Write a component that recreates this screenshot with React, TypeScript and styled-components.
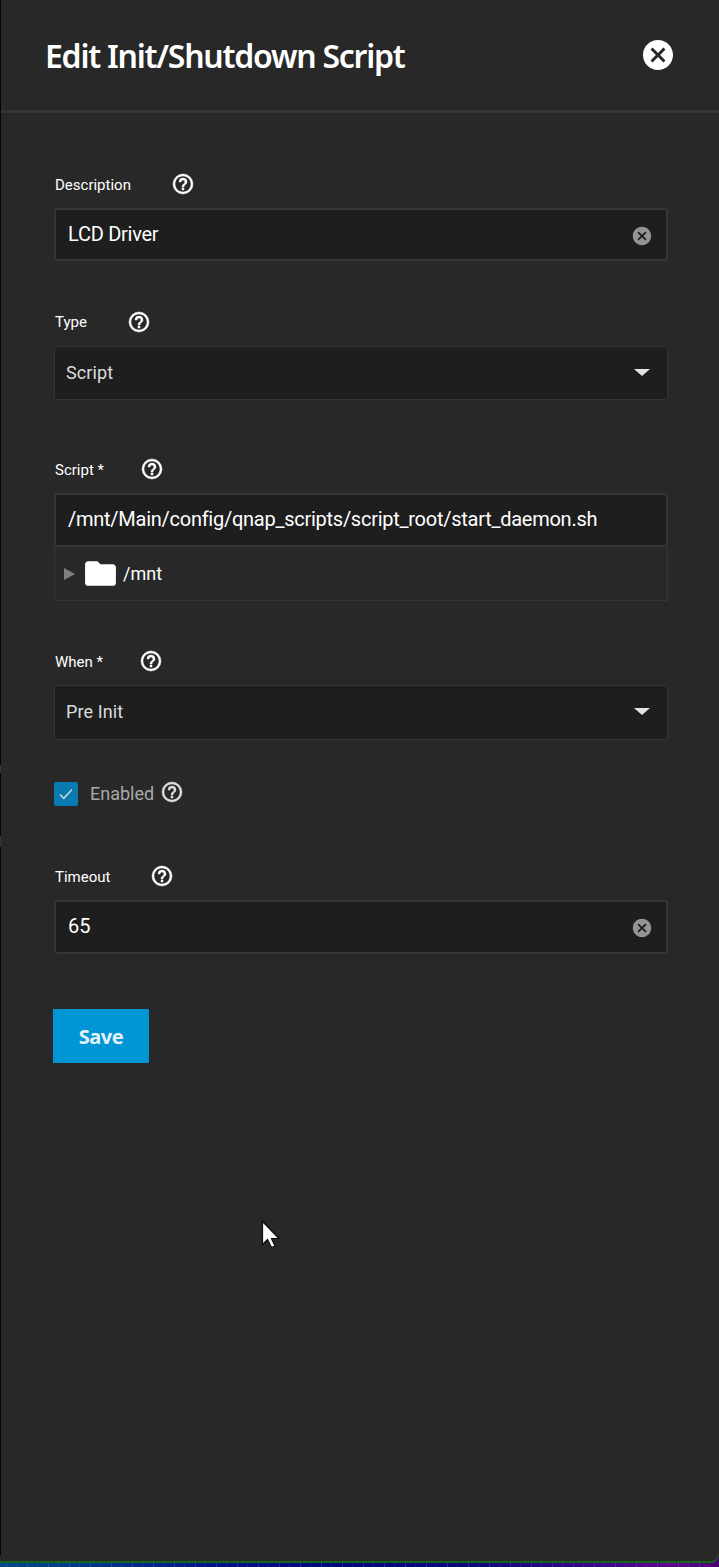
import React from "react";
import styled, { createGlobalStyle } from "styled-components";

const GlobalStyle = createGlobalStyle`
  *, *::before, *::after { box-sizing: border-box; }
  body { margin: 0; background: #000; font-family: Roboto, "Liberation Sans", sans-serif; color: #fff; overflow: hidden; }
`;

const Screen = styled.div`
  display: flex;
  flex-direction: column;
  width: 719px;
  height: 1567px;
  padding-left: 1px;
  position: relative;
  background: #050505;
`;

const Panel = styled.section`
  flex: 1;
  display: flex;
  flex-direction: column;
  background: #282828;
`;

const WindowEdge = styled.div`
  height: 8px;
  flex: none;
  border: solid #14641a;
  border-width: 0 2px 2px 0;
  border-right-color: #1d4a22;
  border-radius: 0 0 10px 0;
  background: #282828;
`;

const Footer = styled.div`
  flex: none;
  height: 12px;
  margin-left: -1px;
  display: flex;
  flex-direction: column;
  background:
    repeating-linear-gradient(90deg, transparent 0 6px, rgba(80, 110, 255, 0.35) 6px 7px, transparent 7px 16px, rgba(80, 110, 255, 0.18) 16px 17px, transparent 17px 21px),
    linear-gradient(90deg, #00498a 0, #00378a 90px, #00108a 220px, #000080 340px, #10007c 480px, #3a0088 590px, #62008c 670px, #4a0072 719px);
`;

const Header = styled.header`
  height: 113px;
  padding: 0 45px;
  display: flex;
  align-items: center;
  justify-content: space-between;
  border-bottom: 3px solid #353535;
`;

const Title = styled.h1`
  margin: 1px 0 0 -1px;
  font: 600 32px/40px "Noto Sans", sans-serif;
  letter-spacing: -1.25px;
  white-space: nowrap;
`;

const CloseButton = styled.button`
  display: flex;
  width: 36px;
  height: 36px;
  margin-right: -2px;
  padding: 0;
  border: 0;
  background: none;
  color: #fff;
`;

const Form = styled.form`
  display: flex;
  flex-direction: column;
  padding: 0 51px 0 53px;
`;

const Field = styled.div<{ $top: number }>`
  margin-top: ${(p) => p.$top}px;
`;

const LabelRow = styled.div<{ $gap: number }>`
  display: flex;
  align-items: center;
  gap: ${(p) => p.$gap}px;
  height: 24px;
  margin-bottom: 12px;
  padding-left: 1px;
`;

const Label = styled.label<{ $raised?: boolean }>`
  font-size: 15px;
  line-height: 24px;
  padding: ${(p) => (p.$raised ? "0 0 1px" : "1px 0 0")};
`;

const InputBox = styled.div<{ $height?: number }>`
  display: flex;
  align-items: center;
  justify-content: space-between;
  height: ${(p) => p.$height ?? 54}px;
  padding: 0 13px 0 12px;
  border: 2px solid #353535;
  border-radius: 3px;
  background: #1e1e1e;
`;

const Value = styled.span<{ $spacing?: number }>`
  font-size: 20px;
  line-height: 24px;
  margin-bottom: 2px;
  letter-spacing: ${(p) => p.$spacing ?? -0.26}px;
`;

const ClearIcon = styled.svg`
  width: 22px;
  height: 22px;
  margin-top: 2px;
  fill: #949494;
`;

const SelectBox = styled.div<{ $height: number }>`
  display: flex;
  align-items: center;
  justify-content: space-between;
  height: ${(p) => p.$height}px;
  padding: 0 17px 2px 11px;
  border: 1px solid #353535;
  border-radius: 3px;
  background: #1e1e1e;
  color: #dcdcdc;
  font-size: 18px;
  letter-spacing: 0.1px;
`;

const Caret = styled.span`
  border: solid transparent;
  border-width: 7px 8px 0;
  border-top-color: #e4e4e4;
`;

const Tree = styled.div`
  display: flex;
  align-items: center;
  height: 54px;
  padding-left: 9px;
  border: 1px solid #353535;
  border-top: 0;
  font-size: 18px;
`;

const Expander = styled.span`
  border: solid transparent;
  border-width: 6px 0 6px 11px;
  border-left-color: #808080;
`;

const FolderIcon = styled.svg`
  width: 37px;
  height: 37px;
  margin: 0 4px 0 7px;
  fill: #fff;
`;

const CheckRow = styled.div`
  display: flex;
  align-items: center;
  height: 24px;
  margin-top: 42px;
`;

const Checkbox = styled.span`
  display: grid;
  place-items: center;
  width: 24px;
  height: 24px;
  border-radius: 2px;
  background: #0a7bb0;
`;

const CheckLabel = styled.span`
  margin: -2px 6px 0 12px;
  color: #a9a9a9;
  font-size: 18px;
`;

const HelpSvg = styled.svg<{ $dim?: boolean }>`
  flex: none;
  width: 24px;
  height: 24px;
  fill: currentColor;
  stroke: currentColor;
  stroke-width: 0.5px;
  color: ${(p) => (p.$dim ? "#dedede" : "#fff")};
  margin-top: ${(p) => (p.$dim ? "-4px" : "0")};
`;

const SaveButton = styled.button`
  align-self: flex-start;
  width: 96px;
  height: 54px;
  margin: 55px 0 0 -1px;
  padding: 1px 0 0;
  border: 0;
  background: #0095d5;
  color: #e4f3fb;
  font: 700 20px "Noto Sans", sans-serif;
  letter-spacing: -0.5px;
`;

const Cursor = styled.svg`
  position: absolute;
  left: 261px;
  top: 1220px;
  width: 20px;
  height: 29px;
`;

const BackdropMark = styled.span<{ $top: number; $height: number }>`
  position: absolute;
  left: 0;
  top: ${(p) => p.$top}px;
  width: 1px;
  height: ${(p) => p.$height}px;
  background: #353535;
`;

const CLOSE_CIRCLE =
  "M12,2C17.53,2 22,6.47 22,12C22,17.53 17.53,22 12,22C6.47,22 2,17.53 2,12C2,6.47 6.47,2 12,2M15.59,7L12,10.59L8.41,7L7,8.41L10.59,12L7,15.59L8.41,17L12,13.41L15.59,17L17,15.59L13.41,12L17,8.41L15.59,7Z";

const Help = ({ dim }: { dim?: boolean }) => (
  <HelpSvg viewBox="0 0 24 24" $dim={dim}>
    <path d="M11,18H13V16H11V18M12,2A10,10 0 0,0 2,12A10,10 0 0,0 12,22A10,10 0 0,0 22,12A10,10 0 0,0 12,2M12,20C7.59,20 4,16.41 4,12C4,7.59 7.59,4 12,4C16.41,4 20,7.59 20,12C20,16.41 16.41,20 12,20M12,6A4,4 0 0,0 8,10H10A2,2 0 0,1 12,8A2,2 0 0,1 14,10C14,12 11,11.75 11,15H13C13,12.75 16,12.5 16,10A4,4 0 0,0 12,6Z" />
  </HelpSvg>
);

type FieldLabelProps = { children: React.ReactNode; gap?: number; raised?: boolean };

const FieldLabel = ({ children, gap = 40, raised }: FieldLabelProps) => (
  <LabelRow $gap={gap}>
    <Label $raised={raised}>{children}</Label>
    <Help />
  </LabelRow>
);

const Clear = () => (
  <ClearIcon viewBox="0 0 24 24">
    <path d={CLOSE_CIRCLE} />
  </ClearIcon>
);

export default function App() {
  return (
    <Screen>
      <GlobalStyle />
      <Panel>
        <Header>
          <Title>Edit Init/Shutdown Script</Title>
          <CloseButton type="button" aria-label="Close">
            <svg viewBox="0 0 24 24" width="36" height="36" fill="currentColor">
              <path d={CLOSE_CIRCLE} />
            </svg>
          </CloseButton>
        </Header>
        <Form>
          <Field $top={59}>
            <FieldLabel>Description</FieldLabel>
            <InputBox $height={53}>
              <Value>LCD Driver</Value>
              <Clear />
            </InputBox>
          </Field>
          <Field $top={49}>
            <FieldLabel raised>Type</FieldLabel>
            <SelectBox $height={54}>
              Script
              <Caret />
            </SelectBox>
          </Field>
          <Field $top={57}>
            <FieldLabel gap={36}>Script *</FieldLabel>
            <InputBox>
              <Value>/mnt/Main/config/qnap_scripts/script_root/start_daemon.sh</Value>
            </InputBox>
            <Tree>
              <Expander />
              <FolderIcon viewBox="0 0 24 24">
                <path d="M10,4H4C2.89,4 2,4.89 2,6V18A2,2 0 0,0 4,20H20A2,2 0 0,0 22,18V8C22,6.89 21.1,6 20,6H12L10,4Z" />
              </FolderIcon>
              /mnt
            </Tree>
          </Field>
          <Field $top={48}>
            <FieldLabel gap={36}>When *</FieldLabel>
            <SelectBox $height={55}>
              Pre Init
              <Caret />
            </SelectBox>
          </Field>
          <CheckRow>
            <Checkbox>
              <svg width="14" height="12" viewBox="0 0 14 12" fill="none" stroke="#c5d5dd" strokeWidth="1.6">
                <path d="M1 6.5 4.8 10.3 13 1.5" />
              </svg>
            </Checkbox>
            <CheckLabel>Enabled</CheckLabel>
            <Help dim />
          </CheckRow>
          <Field $top={58}>
            <FieldLabel>Timeout</FieldLabel>
            <InputBox>
              <Value $spacing={0}>65</Value>
              <Clear />
            </InputBox>
          </Field>
          <SaveButton type="button">Save</SaveButton>
        </Form>
      </Panel>
      <Footer>
        <WindowEdge />
      </Footer>
      <BackdropMark $top={765} $height={8} />
      <BackdropMark $top={836} $height={11} />
      <Cursor viewBox="0 0 20 29">
        <path d="M1.5 1.5V24.5L6.5 19.5L10.5 27.5L14 26L10.5 18.5H18Z" fill="#fff" stroke="#0b0b14" strokeWidth="1.2" />
      </Cursor>
    </Screen>
  );
}
